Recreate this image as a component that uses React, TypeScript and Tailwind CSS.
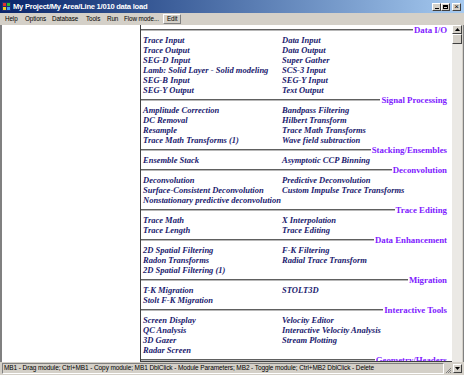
import React from "react";

const sections: { title: string; items: [string, string][] }[] = [
  {
    title: "Data I/O",
    items: [
      ["Trace Input", "Data Input"],
      ["Trace Output", "Data Output"],
      ["SEG-D Input", "Super Gather"],
      ["Lamb: Solid Layer - Solid modeling", "SCS-3 Input"],
      ["SEG-B Input", "SEG-Y Input"],
      ["SEG-Y Output", "Text Output"],
    ],
  },
  {
    title: "Signal Processing",
    items: [
      ["Amplitude Correction", "Bandpass Filtering"],
      ["DC Removal", "Hilbert Transform"],
      ["Resample", "Trace Math Transforms"],
      ["Trace Math Transforms (1)", "Wave field subtraction"],
    ],
  },
  {
    title: "Stacking/Ensembles",
    items: [["Ensemble Stack", "Asymptotic CCP Binning"]],
  },
  {
    title: "Deconvolution",
    items: [
      ["Deconvolution", "Predictive Deconvolution"],
      ["Surface-Consistent Deconvolution", "Custom Impulse Trace Transforms"],
      ["Nonstationary predictive deconvolution", ""],
    ],
  },
  {
    title: "Trace Editing",
    items: [
      ["Trace Math", "X Interpolation"],
      ["Trace Length", "Trace Editing"],
    ],
  },
  {
    title: "Data Enhancement",
    items: [
      ["2D Spatial Filtering", "F-K Filtering"],
      ["Radon Transforms", "Radial Trace Transform"],
      ["2D Spatial Filtering (1)", ""],
    ],
  },
  {
    title: "Migration",
    items: [
      ["T-K Migration", "STOLT3D"],
      ["Stolt F-K Migration", ""],
    ],
  },
  {
    title: "Interactive Tools",
    items: [
      ["Screen Display", "Velocity Editor"],
      ["QC Analysis", "Interactive Velocity Analysis"],
      ["3D Gazer", "Stream Plotting"],
      ["Radar Screen", ""],
    ],
  },
  { title: "Geometry/Headers", items: [] },
];

// menu labels with the width each one takes in the bar
const menus: [string, string][] = [
  ["Help", "w-[20px]"],
  ["Options", "w-[27px]"],
  ["Database", "w-[34px]"],
  ["Tools", "w-[21px]"],
  ["Run", "w-[17px]"],
  ["Flow mode...", "w-[39px]"],
];

function WinButton({ children }: { children: React.ReactNode }) {
  return (
    <div className="w-[9px] h-[8px] bg-[#d4d0c8] border-t border-l border-t-white border-l-white border-r border-b border-r-[#404040] border-b-[#404040] flex items-center justify-center">
      {children}
    </div>
  );
}

export default function App() {
  return (
    <div className="w-[464px] h-[375px] bg-[#d4d0c8] flex flex-col overflow-hidden font-['Liberation_Sans',sans-serif]">
      {/* Title bar */}
      <div className="h-[13px] flex items-center bg-gradient-to-r from-[#0a246a] to-[#a6caf0] pl-[2px] pr-[3px]">
        <svg width="9" height="9" viewBox="0 0 9 9" className="mr-[2px]">
          <rect x="0" y="0" width="9" height="9" fill="#203070" />
          <rect x="1" y="1" width="3" height="3" fill="#e03030" />
          <rect x="5" y="1" width="3" height="3" fill="#30c030" />
          <rect x="1" y="5" width="3" height="3" fill="#f0d020" />
          <rect x="5" y="5" width="3" height="3" fill="#40a0f0" />
        </svg>
        <span className="text-white font-bold text-[7.6px] leading-none tracking-[-0.25px] whitespace-nowrap">
          My Project/My Area/Line 1/010 data load
        </span>
        <div className="ml-auto flex items-center">
          <WinButton>
            <div className="w-[4px] h-[1px] bg-black mt-[3px]" />
          </WinButton>
          <WinButton>
            <div className="w-[5px] h-[4px] border border-black border-t-2" />
          </WinButton>
          <div className="w-[2px]" />
          <WinButton>
            <span className="text-[8px] leading-none text-black">×</span>
          </WinButton>
        </div>
      </div>

      {/* Menu bar */}
      <div className="h-[12px] flex items-center pl-[5px] text-[6.3px] leading-none text-black tracking-[-0.1px]">
        {menus.map(([m, w]) => (
          <span key={m} className={`${w} shrink-0 whitespace-nowrap`}>
            {m}
          </span>
        ))}
        <span className="px-[3px] h-[10px] flex items-center border-t border-l border-t-white border-l-white border-r border-b border-r-[#808080] border-b-[#808080]">
          Edit
        </span>
      </div>

      {/* Main area */}
      <div className="flex flex-1 min-h-0">
        <div className="w-[141px] bg-white border-l-2 border-l-[#808080] border-r border-r-[#404040]" />
        <div className="flex-1 bg-white overflow-hidden border-b border-b-[#404040] font-['Liberation_Serif',serif]">
          {sections.map((s) => (
            <div key={s.title}>
              <div className="h-[10px] flex items-center">
                <div className="flex-1 flex flex-col">
                  <div className="h-px bg-[#606060]" />
                  <div className="h-px bg-[#b8b8b8]" />
                </div>
                <span className="pl-[1px] pr-[5px] text-[8.8px] leading-[10px] font-bold text-[#8020ff] whitespace-nowrap">
                  {s.title}
                </span>
              </div>
              {s.items.map(([a, b], i) => (
                <div
                  key={i}
                  className="h-[10px] flex pl-[2px] text-[8.5px] leading-[10px] font-bold italic text-[#1a1a6e] whitespace-nowrap"
                >
                  <span className="w-[139px] shrink-0 overflow-visible">{a}</span>
                  <span>{b}</span>
                </div>
              ))}
            </div>
          ))}
        </div>
        {/* Scrollbar */}
        <div className="w-[10px] flex flex-col bg-[#ebe9e5]">
          <div className="h-[9px] bg-[#d4d0c8] border-t border-l border-t-white border-l-white border-r border-b border-r-[#404040] border-b-[#404040] flex items-center justify-center">
            <svg width="5" height="3" viewBox="0 0 5 3">
              <path d="M2.5 0 L5 3 L0 3 Z" fill="#000" />
            </svg>
          </div>
          <div className="h-[10px] bg-[#d4d0c8] border-t border-l border-t-white border-l-white border-r border-b border-r-[#404040] border-b-[#404040]" />
        </div>
        <div className="w-[2px] bg-[#d4d0c8] border-r border-r-[#808080]" />
      </div>

      {/* Status bar */}
      <div className="h-[13px] flex items-center pl-[2px] pr-[2px]">
        <div className="flex-1 h-[11px] flex items-center border-t border-l border-t-[#808080] border-l-[#808080] border-r border-b border-r-white border-b-white pl-[1px]">
          <span className="text-[6.5px] leading-none text-black whitespace-nowrap tracking-[-0.1px]">
            MB1 - Drag module; Ctrl+MB1 - Copy module; MB1 DblClick - Module Parameters; MB2 - Toggle module; Ctrl+MB2 DblClick - Delete
          </span>
        </div>
        <svg width="7" height="7" viewBox="0 0 7 7" className="ml-[1px] self-end mb-[1px]">
          <path d="M6 1 L1 6 M6 3 L3 6 M6 5 L5 6" stroke="#808080" strokeWidth="1" />
        </svg>
        <div className="w-[9px] h-[9px] bg-[#d4d0c8] border-t border-l border-t-white border-l-white border-r border-b border-r-[#404040] border-b-[#404040] flex items-center justify-center ml-[1px]">
          <svg width="5" height="3" viewBox="0 0 5 3">
            <path d="M0 0 L5 0 L2.5 3 Z" fill="#000" />
          </svg>
        </div>
      </div>
    </div>
  );
}
